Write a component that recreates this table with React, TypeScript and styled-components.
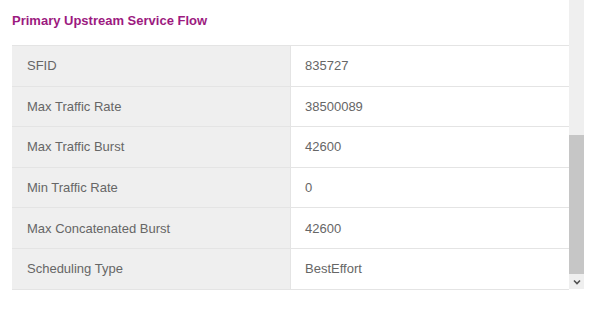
import { FC, Fragment } from "react"
import styled, { createGlobalStyle } from "styled-components"

const GlobalStyle = createGlobalStyle`
  html, body {
    margin: 0;
    padding: 0;
    background: #ffffff;
    overflow: hidden;
  }
`

const Frame = styled.div`
  display: flex;
  width: 600px;
  height: 309px;
  align-items: flex-start;
`

const Content = styled.div`
  width: 557px;
  padding: 0 0 0 12px;
  font-family: "Liberation Sans", Arial, sans-serif;
`

const Title = styled.h4`
  margin: 0;
  height: 45px;
  line-height: 41px;
  font-size: 13px;
  font-weight: bold;
  color: #9c1a80;
`

const Table = styled.div`
  display: grid;
  grid-template-columns: 278px 1fr;
  border-top: 1px solid #e4e4e4;
`

const Cell = styled.div<{ $label?: boolean }>`
  display: flex;
  align-items: center;
  height: 39.6px;
  border-bottom: 1px solid #e4e4e4;
  padding-left: ${(p) => (p.$label ? "15px" : "14px")};
  background: ${(p) => (p.$label ? "#efefef" : "#ffffff")};
  border-left: ${(p) => (p.$label ? "none" : "1px solid #e4e4e4")};
  font-size: 13px;
  color: #666666;
`

const Scrollbar = styled.div`
  display: flex;
  flex-direction: column;
  width: 15px;
  height: 289px;
  background: #efefef;
`

const Thumb = styled.div`
  margin-top: 135px;
  height: 139px;
  background: #c6c6c6;
`

const ArrowButton = styled.div`
  display: flex;
  align-items: center;
  justify-content: center;
  height: 15px;
`

const rows = [
  ["SFID", "835727"],
  ["Max Traffic Rate", "38500089"],
  ["Max Traffic Burst", "42600"],
  ["Min Traffic Rate", "0"],
  ["Max Concatenated Burst", "42600"],
  ["Scheduling Type", "BestEffort"],
]

const App: FC = () => {
  return (
    <>
      <GlobalStyle />
      <Frame>
        <Content>
          <Title>Primary Upstream Service Flow</Title>
          <Table>
            {rows.map(([label, value]) => (
              <Fragment key={label}>
                <Cell $label>{label}</Cell>
                <Cell>{value}</Cell>
              </Fragment>
            ))}
          </Table>
        </Content>
        <Scrollbar>
          <Thumb />
          <ArrowButton>
            <svg width="8" height="6" viewBox="0 0 8 6">
              <path d="M1 1.5 L4 4.5 L7 1.5" stroke="#505050" strokeWidth="1.6" fill="none" />
            </svg>
          </ArrowButton>
        </Scrollbar>
      </Frame>
    </>
  )
}

export default App
